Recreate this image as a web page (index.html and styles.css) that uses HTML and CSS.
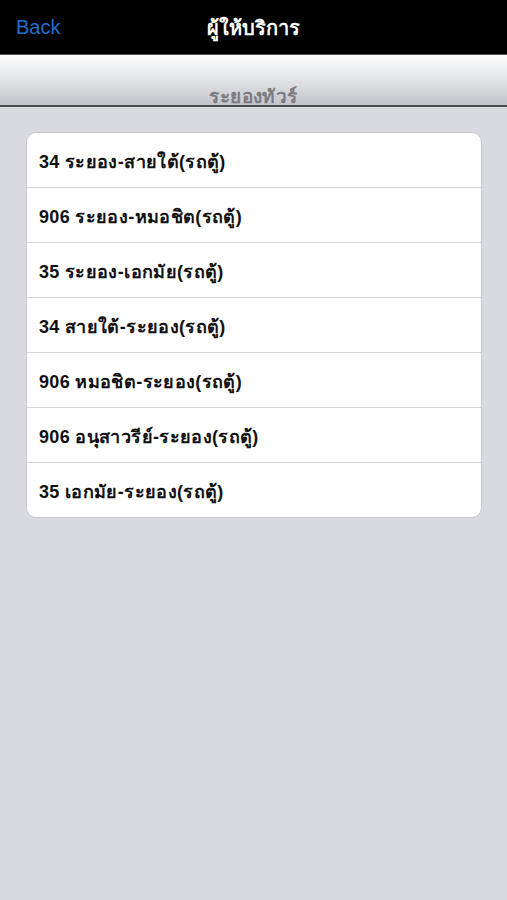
FILE: index.html
```html
<!DOCTYPE html>
<html lang="th">
<head>
<meta charset="utf-8">
<link rel="stylesheet" href="styles.css">
</head>
<body>
<div class="navbar">
  <span class="back">Back</span>
  <span class="title">ผู้ให้บริการ</span>
</div>
<div class="subheader"><span>ระยองทัวร์</span></div>
<main class="content">
  <ul class="list">
    <li>34 ระยอง-สายใต้(รถตู้)</li>
    <li>906 ระยอง-หมอชิต(รถตู้)</li>
    <li>35 ระยอง-เอกมัย(รถตู้)</li>
    <li>34 สายใต้-ระยอง(รถตู้)</li>
    <li>906 หมอชิต-ระยอง(รถตู้)</li>
    <li>906 อนุสาวรีย์-ระยอง(รถตู้)</li>
    <li>35 เอกมัย-ระยอง(รถตู้)</li>
  </ul>
</main>
</body>
</html>
```

FILE: styles.css
```css
* { box-sizing: border-box; }
html, body { margin: 0; padding: 0; }
body {
  width: 507px;
  height: 900px;
  background: #d9dae0;
  font-family: "Liberation Sans", "Noto Sans", "DejaVu Sans", sans-serif;
  overflow: hidden;
}
.navbar {
  height: 55px;
  background: #000;
  border-bottom: 1px solid #555;
  position: relative;
  display: flex;
  align-items: center;
  justify-content: center;
  padding-top: 2px;
}
.back {
  position: absolute;
  left: 16px;
  top: 16px;
  color: #1f6fd0;
  font-size: 20px;
}
.title {
  color: #fff;
  font-size: 20px;
  font-weight: bold;
}
.subheader {
  height: 52px;
  background: linear-gradient(#fdfdfd 0%, #e8e9ec 40%, #c3c4ca 100%);
  border-bottom: 2px solid #4e4e52;
  display: flex;
  align-items: flex-end;
  justify-content: center;
}
.subheader span {
  color: #7b7b80;
  font-size: 19px;
  font-weight: bold;
  letter-spacing: 0.4px;
  line-height: 24px;
  margin-bottom: -4px;
}
.content {
  padding: 25px 25px 0 26px;
}
.list {
  list-style: none;
  margin: 0;
  padding: 0;
  background: #fff;
  border: 1px solid #c6c6cb;
  border-radius: 10px;
  overflow: hidden;
}
.list li {
  height: 55px;
  display: flex;
  align-items: center;
  padding-left: 12px;
  padding-top: 2px;
  font-size: 18px;
  font-weight: bold;
  letter-spacing: 0.35px;
  color: #111;
  border-top: 1px solid #d6d6da;
}
.list li:first-child { border-top: none; height: 54px; }
```
